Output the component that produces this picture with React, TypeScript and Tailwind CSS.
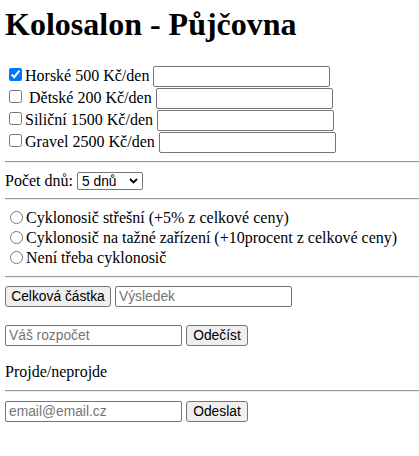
import React from "react";

const BIKES = [
  { label: "Horské 500 Kč/den", checked: true, indent: false },
  { label: "Dětské 200 Kč/den", checked: false, indent: true },
  { label: "Siliční 1500 Kč/den", checked: false, indent: false },
  { label: "Gravel 2500 Kč/den", checked: false, indent: false },
];

const RACKS = [
  "Cyklonosič střešní (+5% z celkové ceny)",
  "Cyklonosič na tažné zařízení (+10procent z celkové ceny)",
  "Není třeba cyklonosič",
];

const field =
  "h-[21px] w-[177px] shrink-0 rounded-[2px] border border-[#767676] bg-white px-[3px] font-['Liberation_Sans',Arial,sans-serif] text-[13.8px] text-black placeholder:text-[#757575] outline-none";

const button =
  "h-[21px] shrink-0 whitespace-nowrap rounded-[3px] border border-[#767676] bg-[#efefef] text-center font-['Liberation_Sans',Arial,sans-serif] text-[13.8px] leading-[17px] text-black";

function Rule() {
  return <div className="h-[2px] border-t border-b border-t-[#9a9a9a] border-b-[#eeeeee]" />;
}

export default function App() {
  return (
    <div className="h-[456px] w-[419px] overflow-hidden bg-white pl-[5px] font-['Liberation_Serif','Times_New_Roman',serif] text-[16px] text-black">
      <h1 className="mt-[6px] text-[32px] font-bold leading-[37px]">Kolosalon - Půjčovna</h1>

      {/* bikes */}
      <div className="mt-[23px]">
        {BIKES.map((b) => (
          <label key={b.label} className="flex h-[22px] items-start">
            <input
              type="checkbox"
              defaultChecked={b.checked}
              className="ml-[4px] mr-[3px] mt-[2px] h-[13px] w-[13px] shrink-0"
            />
            <span className={"whitespace-nowrap leading-[19px] " + (b.indent ? "pl-[4px]" : "")}>{b.label}</span>
            <input type="text" className={"ml-[4px] " + field} />
          </label>
        ))}
      </div>

      <div className="mt-[7px]">
        <Rule />
      </div>

      {/* days */}
      <div className="mt-[8px] flex h-[19px] items-start">
        <span className="leading-[19px]">Počet dnů:</span>
        <div className="relative ml-[4px] mt-[1px] flex">
          <select
            defaultValue="5"
            className="h-[18px] w-[66px] appearance-none rounded-[2px] border border-[#767676] bg-white pl-[4px] font-['Liberation_Sans',Arial,sans-serif] text-[13.8px] leading-[15px] text-black outline-none"
          >
            <option value="1">1 den</option>
            <option value="3">3 dny</option>
            <option value="5">5 dnů</option>
            <option value="7">7 dnů</option>
          </select>
          <svg
            className="pointer-events-none absolute right-[5px] top-[6px]"
            width="9"
            height="6"
            viewBox="0 0 9 6"
            fill="none"
          >
            <path d="M1 1l3.5 3.5L8 1" stroke="#000" strokeWidth="1.8" />
          </svg>
        </div>
      </div>

      <div className="mt-[8px]">
        <Rule />
      </div>

      {/* racks */}
      <div className="mt-[8px]">
        {RACKS.map((r, i) => (
          <label key={r} className="flex h-[20px] items-start">
            <input
              type="radio"
              name="rack"
              className="ml-[5px] mr-[3px] mt-[3px] h-[13px] w-[13px] shrink-0"
              value={i}
            />
            <span className="whitespace-nowrap leading-[20px]">{r}</span>
          </label>
        ))}
      </div>

      <div className="mt-[8px]">
        <Rule />
      </div>

      <div className="mt-[8px] flex items-start gap-[4px]">
        <button className={"w-[106px] " + button}>Celková částka</button>
        <input type="text" placeholder="Výsledek" className={field} />
      </div>

      <div className="mt-[18px] flex items-start gap-[4px]">
        <input type="text" placeholder="Váš rozpočet" className={field} />
        <button className={"w-[62px] " + button}>Odečíst</button>
      </div>

      <p className="mt-[17px] leading-[18px]">Projde/neprojde</p>

      <div className="mt-[9px]">
        <Rule />
      </div>

      <div className="mt-[9px] flex items-start gap-[4px]">
        <input type="email" placeholder="email@email.cz" className={field} />
        <button className={"w-[62px] " + button}>Odeslat</button>
      </div>
    </div>
  );
}
